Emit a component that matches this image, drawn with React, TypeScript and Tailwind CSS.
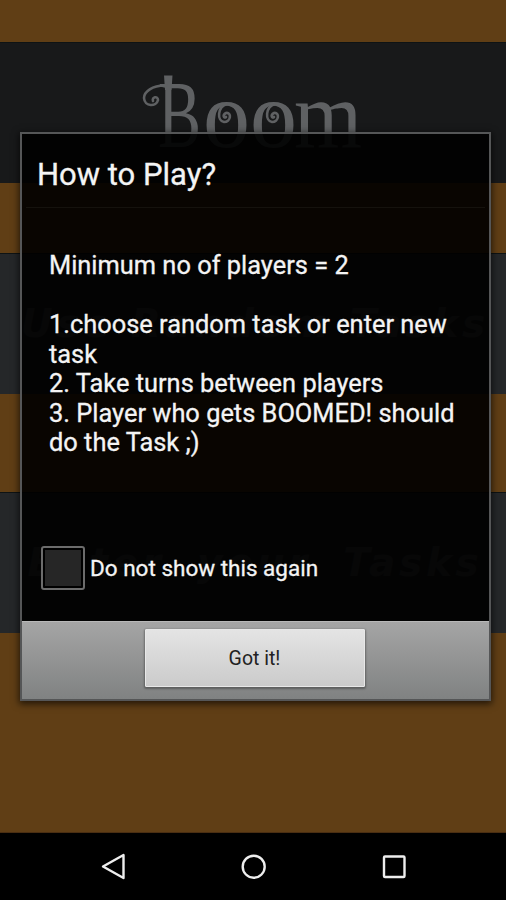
import type { ReactNode } from "react";

const RULES = [
  "Minimum no of players = 2",
  "",
  "1.choose random task or enter new",
  "task",
  "2. Take turns between players",
  "3. Player who gets BOOMED! should",
  "do the Task ;)",
];

function Band({ className, children }: { className: string; children?: ReactNode }) {
  return (
    <div className={`flex shrink-0 items-center justify-center border-t border-[#0e1314] ${className}`}>
      {children}
    </div>
  );
}

function Logo() {
  return (
    <svg
      width="246"
      height="130"
      viewBox="129 48 246 130"
      className="overflow-visible font-['Liberation_Serif',serif]"
      fill="#5f6163"
    >
      <text x="157" y="147" fontSize="95" textLength="43" lengthAdjust="spacingAndGlyphs">B</text>
      <text x="202" y="147" fontSize="96" textLength="47" lengthAdjust="spacingAndGlyphs">o</text>
      <text x="249" y="147" fontSize="96" textLength="47" lengthAdjust="spacingAndGlyphs">o</text>
      <text x="293" y="147" fontSize="96" textLength="68" lengthAdjust="spacingAndGlyphs">m</text>
      {/* stem tip and curls of the logo */}
      <path d="M163 75.5 H171.5 L170.5 90 H164 Z" />
      <g fill="none" stroke="#5f6163" strokeWidth="2.6" strokeLinecap="round">
        <path d="M165 85.500 C151 85 143 92 143 98 C143.500 107 155.500 107 157 100 C157 95.500 150.500 97 152 101" />
        <path d="M226 104 C216 107 216 121 223 122 C230 122 231 112 225 113 C221 115 223 119 225 117" />
        <path d="M274 104 C264 107 264 121 271 122 C278 122 279 112 273 113 C269 115 271 119 273 117" />
      </g>
    </svg>
  );
}

function MenuLabel({ children }: { children: ReactNode }) {
  return (
    <span className="whitespace-nowrap pl-1 font-['DejaVu_Sans',sans-serif] text-[39px] font-bold italic tracking-[3.7px] text-[#4b4e50]">
      {children}
    </span>
  );
}

function Dialog() {
  return (
    <div className="absolute left-[20px] top-[132px] flex h-[569px] w-[471px] flex-col border-2 border-[#555657] shadow-[0_2px_7px_1px_rgba(0,0,0,0.65)]">
      <div className="flex flex-1 flex-col bg-black/91 text-[#f4f4f4] [-webkit-text-stroke:0.3px_#f4f4f4]">
        <h1 className="h-[73px] whitespace-nowrap pl-[15px] pt-[21px] text-[31px] leading-[40px]">
          How to Play?
        </h1>
        <div className="mx-1 h-px bg-[#15120d]" />
        <div className="pl-[27px] pt-[43px] text-[25.4px] leading-[29.5px]">
          {RULES.map((line, i) => (
            <p key={i} className="h-[29.5px] whitespace-nowrap">{line}</p>
          ))}
        </div>
        <label className="mt-[88px] flex items-center gap-[5px] pl-[19px] text-[22.5px]">
          <span className="flex size-[44px] shrink-0 rounded-[3px] border-2 border-[#6c6c6c] bg-black p-[2px]">
            <span className="flex-1 bg-[#262626]" />
          </span>
          <span className="whitespace-nowrap pt-[2px]">Do not show this again</span>
        </label>
      </div>
      <div className="flex h-[78px] shrink-0 justify-center border-t border-[#b8b8b8] bg-linear-to-b from-[#a5a5a5] to-[#808282] pr-[2px] pt-[7px]">
        <button className="h-[58px] w-[220px] rounded-[1px] border border-[#e8e8e8] bg-linear-to-b from-[#e4e4e4] to-[#cbcbcb] pt-[2px] text-[19.5px] text-[#222] shadow-[0_1px_2px_1px_rgba(0,0,0,0.3)]">
          Got it!
        </button>
      </div>
    </div>
  );
}

function NavBar() {
  return (
    <div className="h-[67px] shrink-0 bg-black">
      <svg width="506" height="67" viewBox="0 833 506 67" fill="none" stroke="#eee" strokeWidth="2.4" strokeLinejoin="round">
        <path d="M103 866.5 L123.5 855 V878 Z" />
        <circle cx="253.7" cy="866.7" r="11" />
        <rect x="384" y="856.5" width="20.5" height="20.5" rx="1" />
      </svg>
    </div>
  );
}

export default function App() {
  return (
    <div className="relative flex h-[900px] w-[506px] flex-col overflow-hidden bg-[#603e15] font-[Roboto,sans-serif]">
      <Band className="mt-[42px] h-[141px] bg-[#18191a]">
        <Logo />
      </Band>
      <Band className="mt-[70px] h-[141px] bg-[#252729]">
        <MenuLabel>Use Random Tasks</MenuLabel>
      </Band>
      <Band className="mt-[98px] h-[141px] bg-[#252729] [word-spacing:15px]">
        <MenuLabel>Enter your Tasks</MenuLabel>
      </Band>
      <div className="flex-1 border-b border-[#4a2e12]" />
      <NavBar />
      <Dialog />
    </div>
  );
}
